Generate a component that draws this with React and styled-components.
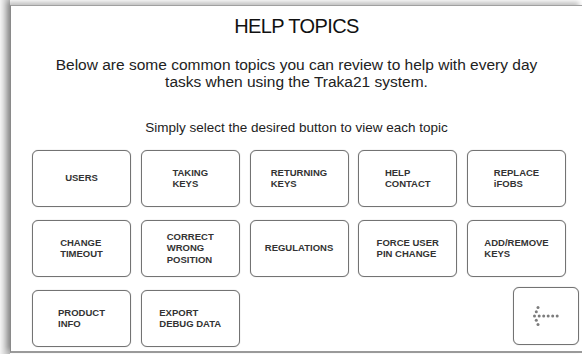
import React from 'react';
import styled, { createGlobalStyle } from 'styled-components';

const GlobalStyle = createGlobalStyle`
  html, body {
    margin: 0;
    padding: 0;
    background: #fff;
  }
  body {
    font-family: 'Liberation Sans', Arial, sans-serif;
  }
`;

const Screen = styled.div`
  width: 582px;
  height: 354px;
  box-sizing: border-box;
  padding: 5px 0 1px 10px;
  background: linear-gradient(90deg, #f4f4f4 0px, #b8b8b8 10px, #fff 10px);
  overflow: hidden;
`;

const Panel = styled.div`
  height: 100%;
  box-sizing: border-box;
  background: #fff;
  border-top: 1px solid #a0a0a0;
  border-left: 1px solid #8a8a8a;
  border-bottom: 2px solid #9a9a9a;
  box-shadow: -3px -3px 5px rgba(0, 0, 0, 0.25);
  padding-top: 8px;
  display: flex;
  flex-direction: column;
`;

const Header = styled.header`
  text-align: center;
  color: #222;
`;

const Title = styled.h1`
  margin: 0;
  font-size: 20px;
  line-height: 24px;
  font-weight: normal;
  letter-spacing: -0.6px;
  color: #111;
`;

const Intro = styled.p`
  margin: 18px 0 0;
  font-size: 15.5px;
  line-height: 17px;
`;

const Hint = styled.p`
  margin: 30px 0 0;
  font-size: 13.5px;
  line-height: 16px;
`;

const Grid = styled.div`
  margin: 13.5px 0 0 21px;
  display: grid;
  grid-template-columns: repeat(5, 99px);
  grid-auto-rows: 57px;
  column-gap: 9.75px;
  row-gap: 13px;
`;

const TopicButton = styled.button`
  display: flex;
  align-items: center;
  justify-content: center;
  padding: 0;
  margin: 0;
  background: #fff;
  border: 1.5px solid #737373;
  border-radius: 6px;
  box-shadow: 0 0 1px rgba(0, 0, 0, 0.35);
  cursor: pointer;
`;

const Label = styled.span`
  display: inline-block;
  text-align: left;
  font-family: 'Liberation Sans', Arial, sans-serif;
  font-weight: bold;
  font-size: 9.5px;
  line-height: 11.5px;
  color: #333;
`;

const BackButton = styled(TopicButton)`
  grid-column: 5;
  justify-self: end;
  align-self: start;
  width: 66px;
  height: 58px;
  margin-top: -3px;
  margin-right: -13px;
`;

const topics = [
  ['USERS'],
  ['TAKING', 'KEYS'],
  ['RETURNING', 'KEYS'],
  ['HELP', 'CONTACT'],
  ['REPLACE', 'iFOBS'],
  ['CHANGE', 'TIMEOUT'],
  ['CORRECT', 'WRONG', 'POSITION'],
  ['REGULATIONS'],
  ['FORCE USER', 'PIN CHANGE'],
  ['ADD/REMOVE', 'KEYS'],
  ['PRODUCT', 'INFO'],
  ['EXPORT', 'DEBUG DATA'],
];

const BackArrow = () => {
  const dots = [
    [6, 1.5], [4.3, 5.8], [2.5, 10], [4.3, 14.2], [6, 18.5],
    [7.2, 10], [11.7, 10], [16.2, 10], [20.7, 10], [25.2, 10],
  ];
  return (
    <svg width="28" height="20" viewBox="0 0 28 20">
      {dots.map(([cx, cy], i) => (
        <circle key={i} cx={cx} cy={cy} r="1.5" fill="#7c7c7c" />
      ))}
    </svg>
  );
};

const App = () => (
  <>
    <GlobalStyle />
    <Screen>
      <Panel>
        <Header>
          <Title>HELP TOPICS</Title>
          <Intro>
            Below are some common topics you can review to help with every day
            <br />
            tasks when using the Traka21 system.
          </Intro>
          <Hint>Simply select the desired button to view each topic</Hint>
        </Header>
        <Grid>
          {topics.map((lines) => (
            <TopicButton key={lines.join(' ')}>
              <Label>
                {lines.map((line, i) => (
                  <React.Fragment key={line}>
                    {i > 0 && <br />}
                    {line}
                  </React.Fragment>
                ))}
              </Label>
            </TopicButton>
          ))}
          <BackButton aria-label="Back">
            <BackArrow />
          </BackButton>
        </Grid>
      </Panel>
    </Screen>
  </>
);

export default App;
